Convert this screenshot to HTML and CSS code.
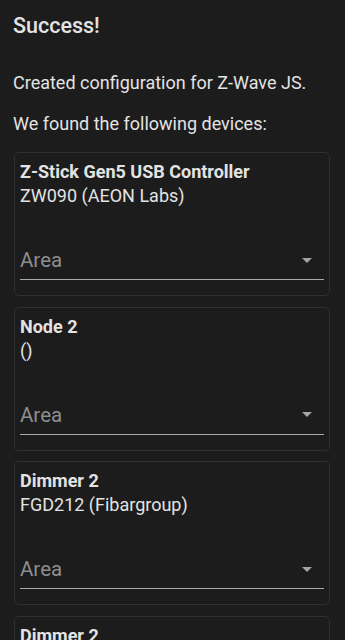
FILE: index.html
```html
<!DOCTYPE html>
<html>
<head>
<meta charset="utf-8">
<link rel="stylesheet" href="styles.css">
</head>
<body>
<div class="page">
  <h1 class="title">Success!</h1>
  <p class="text">Created configuration for Z-Wave JS.</p>
  <p class="text">We found the following devices:</p>
  <div class="devices">
    <div class="card">
      <div class="name">Z-Stick Gen5 USB Controller</div>
      <div class="model">ZW090 (AEON Labs)</div>
      <div class="select"><span class="label">Area</span><span class="arrow"></span></div>
    </div>
    <div class="card">
      <div class="name">Node 2</div>
      <div class="model">()</div>
      <div class="select"><span class="label">Area</span><span class="arrow"></span></div>
    </div>
    <div class="card">
      <div class="name">Dimmer 2</div>
      <div class="model">FGD212 (Fibargroup)</div>
      <div class="select"><span class="label">Area</span><span class="arrow"></span></div>
    </div>
    <div class="card">
      <div class="name">Dimmer 2</div>
      <div class="model">FGD212 (Fibargroup)</div>
      <div class="select"><span class="label">Area</span><span class="arrow"></span></div>
    </div>
  </div>
</div>
</body>
</html>
```
FILE: styles.css
```css
html, body {
  margin: 0;
  padding: 0;
  background: #1c1c1c;
  height: 640px;
  overflow: hidden;
}
.page {
  padding: 12px 15px 0 13px;
  font-family: Roboto, "Liberation Sans", sans-serif;
  color: #e3e3e3;
}
.title {
  margin: 0;
  font-size: 21.5px;
  font-weight: 500;
  line-height: 28px;
}
.text {
  margin: 31px 0 0;
  font-size: 18px;
  line-height: 24px;
}
.text + .text {
  margin-top: 16.5px;
}
.devices {
  margin-top: 16.5px;
  display: flex;
  flex-direction: column;
  gap: 10.67px;
  padding-left: 1px;
}
.card {
  flex: none;
  border: 1px solid #313131;
  border-radius: 5px;
  padding: 7px 5px 15px;
}
.name {
  font-weight: 700;
  font-size: 18px;
  line-height: 24px;
}
.model {
  font-size: 18px;
  line-height: 24px;
}
.select {
  margin-top: 40px;
  padding: 0 12px 7px 0;
  border-bottom: 1px solid #aaaaaa;
  display: flex;
  align-items: center;
  justify-content: space-between;
}
.label {
  font-size: 20.5px;
  line-height: 24px;
  color: #8e8e8e;
}
.arrow {
  width: 0;
  height: 0;
  border-left: 5.5px solid transparent;
  border-right: 5.5px solid transparent;
  border-top: 5.5px solid #a4a4a4;
}
```
